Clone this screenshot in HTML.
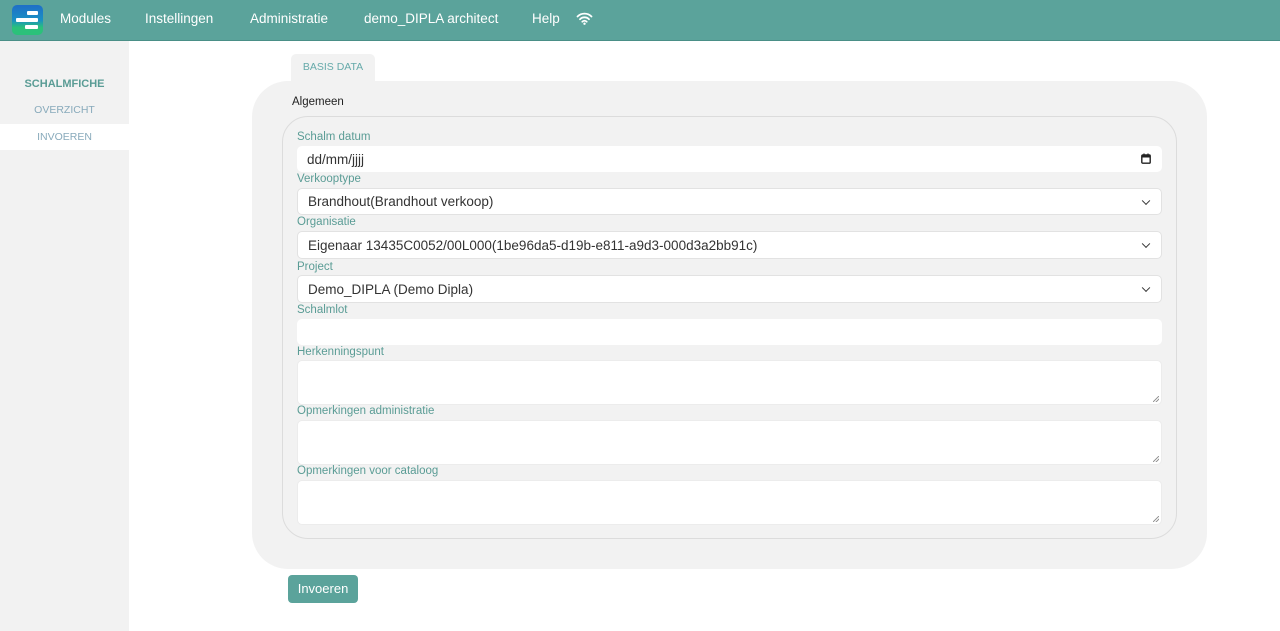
<!DOCTYPE html>
<html><head><style>
*{box-sizing:border-box;margin:0;padding:0}
body{width:1280px;height:631px;overflow:hidden;background:#fff;font-family:"Liberation Sans",sans-serif;position:relative}
.hdr{position:absolute;left:0;top:0;width:1280px;height:41px;background:#5ba39b;border-bottom:1px solid #4a8f87}
.hdr span{position:absolute;top:11px;color:#fff;font-size:13.5px}
.logo{position:absolute;left:12px;top:5px;width:31px;height:30px;border-radius:5px;background:linear-gradient(#1f6fc7 0%,#1a8fc4 50%,#2bc17a 75%,#2bc17a 100%);overflow:hidden}
.logo i{position:absolute;height:4px;background:#fff;border-radius:1px}
.side{position:absolute;left:0;top:41px;width:129px;height:590px;background:#f2f2f2}
.side div{position:absolute;left:0;width:129px;text-align:center;font-size:10px;color:#8ab;}
.abs{position:absolute}
.lbl{position:absolute;left:297px;font-size:11.5px;color:#5a9c95}
.inp{position:absolute;left:297px;width:865px;background:#fff;border-radius:5px;font-size:13.5px;color:#333;padding-left:10px;display:flex;align-items:center}
.sel{border:1px solid #e2e2e2}
.chev{position:absolute;right:12px;top:50%;width:6px;height:6px;border-right:1.3px solid #333;border-bottom:1.3px solid #333;transform:translateY(-70%) rotate(45deg)}
.ta{border:1px solid #ececec}
.grip{position:absolute;right:2px;bottom:2px;width:6px;height:6px;background:linear-gradient(135deg,transparent 45%,#999 45%,#999 55%,transparent 55%,transparent 70%,#999 70%,#999 80%,transparent 80%)}
</style></head><body>
<div class="hdr">
<div class="logo"><i style="left:15px;top:6px;width:11px"></i><i style="left:4px;top:13px;width:22px"></i><i style="left:13px;top:20px;width:13px"></i></div>
<span style="left:60px">Modules</span>
<span style="left:145px">Instellingen</span>
<span style="left:250px">Administratie</span>
<span style="left:364px">demo_DIPLA architect</span>
<span style="left:532px">Help</span>
<svg class="abs" style="left:576px;top:12px" width="17" height="13" viewBox="0 0 17 13"><path d="M1.5 4.5a10 10 0 0 1 14 0M4 7.2a6.3 6.3 0 0 1 9 0M6.3 9.7a3 3 0 0 1 4.4 0" stroke="#fff" stroke-width="1.8" fill="none" stroke-linecap="round"/><circle cx="8.5" cy="11.7" r="1.2" fill="#fff"/></svg>
</div>
<div class="side">
<div style="top:37px;font-size:11px;font-weight:bold;color:#5a9c95">SCHALMFICHE</div>
<div style="top:63px;font-size:10.5px">OVERZICHT</div>
<div style="top:83px;height:26px;background:#fff;line-height:26px;font-size:10.5px">INVOEREN</div>
</div>
<div class="abs" style="left:291px;top:54px;width:84px;height:30px;background:#f2f2f2;border-radius:5px 5px 0 0;font-size:10.5px;color:#6aa;text-align:center;line-height:27px">BASIS DATA</div>
<div class="abs" style="left:252px;top:81px;width:955px;height:488px;background:#f2f2f2;border-radius:36px"></div>
<div class="abs" style="left:292px;top:96px;font-size:11.5px;color:#222">Algemeen</div>
<div class="abs" style="left:282px;top:116px;width:895px;height:423px;border:1px solid #dcdcdc;border-radius:26px"></div>
<div class="lbl" style="top:131px">Schalm datum</div>
<div class="inp" style="top:146px;height:26px">dd/mm/jjjj
<svg class="abs" style="right:11px;top:7px" width="10" height="11" viewBox="0 0 10 11"><rect x="0.8" y="2" width="8.4" height="8.2" rx="1" fill="none" stroke="#222" stroke-width="1.4"/><rect x="0.8" y="2" width="8.4" height="2.5" fill="#222"/><path d="M3 0.5v2M7 0.5v2" stroke="#222" stroke-width="1.2"/></svg></div>
<div class="lbl" style="top:173px">Verkooptype</div>
<div class="inp sel" style="top:188px;height:27px">Brandhout(Brandhout verkoop)<i class="chev"></i></div>
<div class="lbl" style="top:216px">Organisatie</div>
<div class="inp sel" style="top:231px;height:28px">Eigenaar 13435C0052/00L000(1be96da5-d19b-e811-a9d3-000d3a2bb91c)<i class="chev"></i></div>
<div class="lbl" style="top:261px">Project</div>
<div class="inp sel" style="top:275px;height:28px">Demo_DIPLA (Demo Dipla)<i class="chev"></i></div>
<div class="lbl" style="top:304px">Schalmlot</div>
<div class="inp" style="top:319px;height:26px"></div>
<div class="lbl" style="top:346px">Herkenningspunt</div>
<div class="inp ta" style="top:360px;height:45px"><i class="grip"></i></div>
<div class="lbl" style="top:405px">Opmerkingen administratie</div>
<div class="inp ta" style="top:420px;height:45px"><i class="grip"></i></div>
<div class="lbl" style="top:465px">Opmerkingen voor cataloog</div>
<div class="inp ta" style="top:480px;height:45px"><i class="grip"></i></div>
<div class="abs" style="left:288px;top:575px;width:70px;height:28px;background:#5ba39b;border-radius:4px;color:#fff;font-size:13px;text-align:center;line-height:27px">Invoeren</div>
</body></html>
